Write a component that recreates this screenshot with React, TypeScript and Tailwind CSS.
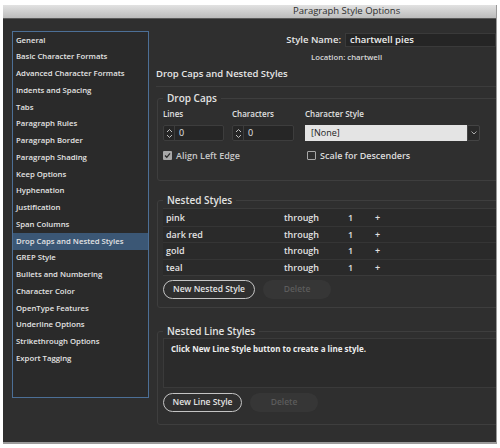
import React from "react";

const font = { fontFamily: '"Open Sans", "DejaVu Sans", sans-serif' };

const sections = [
  "General",
  "Basic Character Formats",
  "Advanced Character Formats",
  "Indents and Spacing",
  "Tabs",
  "Paragraph Rules",
  "Paragraph Border",
  "Paragraph Shading",
  "Keep Options",
  "Hyphenation",
  "Justification",
  "Span Columns",
  "Drop Caps and Nested Styles",
  "GREP Style",
  "Bullets and Numbering",
  "Character Color",
  "OpenType Features",
  "Underline Options",
  "Strikethrough Options",
  "Export Tagging",
];

const nested = ["pink", "dark red", "gold", "teal"];

const Spinner: React.FC<{ width: string }> = ({ width }) => (
  <div className={`flex h-[16px] ${width} rounded-[2px] border border-[#3d3d3d] bg-[#262626]`}>
    <div className="flex w-[11px] flex-col items-center justify-center border-r border-[#3d3d3d]">
      <svg width="7" height="11" viewBox="0 0 7 11" fill="none" stroke="#bdbdbd" strokeWidth="1">
        <path d="M1 4 L3.5 1.5 L6 4" />
        <path d="M1 7 L3.5 9.5 L6 7" />
      </svg>
    </div>
    <span className="pl-[4px] text-[9px] leading-[14px] text-[#e6e6e6]">0</span>
  </div>
);

const Group: React.FC<{ title: string; className?: string; children: React.ReactNode }> = ({
  title,
  className,
  children,
}) => (
  <fieldset
    className={`-mr-[6px] ml-[1px] rounded-[3px] border border-[#3e3e3e] pl-[5px] ${className ?? ""}`}
  >
    <legend className="px-[4px] text-[10px] font-semibold leading-[12px] text-[#e2e2e2]">{title}</legend>
    {children}
  </fieldset>
);

const PillButton: React.FC<{ label: string; width: string; disabled?: boolean }> = ({
  label,
  width,
  disabled,
}) =>
  disabled ? (
    <div
      className={`flex h-[19px] ${width} items-center justify-center rounded-full bg-[#363636] text-[8.5px] font-semibold text-[#5c5c5c]`}
    >
      {label}
    </div>
  ) : (
    <div
      className={`flex h-[19px] ${width} items-center justify-center rounded-full border border-[#c4c4c4] text-[8.5px] font-semibold text-[#e4e4e4]`}
    >
      {label}
    </div>
  );

export default function App() {
  return (
    <div className="h-[448px] w-[500px] bg-white pl-[3px] pt-[5px]" style={font}>
      <div className="flex h-[439px] w-[494px] flex-col border-b-2 border-r border-[#9a9a9a]">
        {/* title bar */}
        <div className="flex h-[14px] items-center border-b border-[#5a5a5a] bg-gradient-to-b from-[#e2e2e2] to-[#bcbcbc] pl-[290px] text-[9.5px] text-[#2e2e2e]">
          Paragraph Style Options
        </div>

        <div className="flex flex-1 overflow-hidden bg-[#2f2f2f]">
          {/* sidebar */}
          <div className="ml-[9px] mt-[12px] h-[367px] w-[137px] shrink-0 border border-[#4c6f96] bg-[#2a2a2a]">
            {sections.map((s) => (
              <div
                key={s}
                className={`flex h-[16.75px] items-center pl-[3px] text-[7.75px] font-semibold text-[#e4e4e4] ${
                  s === "Drop Caps and Nested Styles" ? "bg-[#3b5775]" : ""
                }`}
              >
                {s}
              </div>
            ))}
          </div>

          {/* main */}
          <div className="ml-[7px] flex flex-1 flex-col pt-[14px]">
            <div className="flex h-[14px] items-center">
              <div className="w-[189px] pr-[4px] text-right text-[9.5px] font-semibold text-[#e6e6e6]">
                Style Name:
              </div>
              <div className="flex h-[14px] flex-1 items-center border border-[#3a3a3a] bg-[#252525] pl-[4px] text-[9.5px] font-semibold text-[#eeeeee]">
                chartwell pies
              </div>
            </div>
            <div className="mt-[4px] h-[12px] pl-[155px] text-[7.75px] font-semibold leading-[12px] text-[#d6d6d6]">
              Location: chartwell
            </div>
            <div className="mt-[4px] h-[14px] text-[9.5px] font-semibold leading-[14px] text-[#e6e6e6]">
              Drop Caps and Nested Styles
            </div>
            <div className="mt-[5px] border-t border-[#3c3c3c]" />

            <Group title="Drop Caps" className="mt-[5px] h-[89px]">
              <div className="mt-[4px] flex text-[8px] font-semibold text-[#e0e0e0]">
                <div className="w-[69px]">Lines</div>
                <div className="w-[73px]">Characters</div>
                <div>Character Style</div>
              </div>
              <div className="mt-[5px] flex items-center">
                <Spinner width="w-[61px]" />
                <div className="ml-[8px]">
                  <Spinner width="w-[62px]" />
                </div>
                <div className="ml-[11px] flex h-[16px]">
                  <div className="flex w-[162px] items-center bg-[#e4e4e4] pl-[6px] text-[9px] text-[#222]">
                    [None]
                  </div>
                  <div className="flex w-[13px] items-center justify-center rounded-r-[2px] border border-[#444] bg-[#2a2a2a]">
                    <svg width="6" height="4" viewBox="0 0 6 4" fill="none" stroke="#aaa" strokeWidth="1">
                      <path d="M0.5 0.5 L3 3 L5.5 0.5" />
                    </svg>
                  </div>
                </div>
              </div>
              <div className="mt-[8px] flex items-center text-[9px] font-semibold text-[#dcdcdc]">
                <div className="flex w-[144px] items-center">
                  <div className="flex h-[9px] w-[9px] items-center justify-center rounded-[1px] bg-[#a8a8a8]">
                    <svg width="7" height="7" viewBox="0 0 7 7" fill="none" stroke="#2a2a2a" strokeWidth="1.3">
                      <path d="M1 3.5 L2.8 5.3 L6 1.3" />
                    </svg>
                  </div>
                  <span className="ml-[4px] text-[#c8c8c8]">Align Left Edge</span>
                </div>
                <div className="h-[9px] w-[9px] rounded-[1px] border border-[#a8a8a8]" />
                <span className="ml-[4px]">Scale for Descenders</span>
              </div>
            </Group>

            <Group title="Nested Styles" className="mt-[13px] h-[114px]">
              <div className="mt-[2px] border-y border-[#3a3a3a] bg-[#2a2a2a]">
                {nested.map((n, i) => (
                  <div
                    key={n}
                    className={`flex h-[16.5px] items-center text-[9px] font-semibold text-[#e2e2e2] ${
                      i > 0 ? "border-t border-[#353535]" : ""
                    }`}
                  >
                    <span className="w-[121px] pl-[3px]">{n}</span>
                    <span className="w-[64px]">through</span>
                    <span className="w-[27px]">1</span>
                    <span>+</span>
                  </div>
                ))}
              </div>
              <div className="mt-[4px] flex gap-[8px]">
                <PillButton label="New Nested Style" width="w-[92px]" />
                <PillButton label="Delete" width="w-[68px]" disabled />
              </div>
            </Group>

            <Group title="Nested Line Styles" className="mt-[17px] h-[100px]">
              <div className="mt-[1px] h-[50px] border border-[#3a3a3a] bg-[#2b2b2b] pl-[7px] pt-[4px] text-[8px] font-bold text-[#eeeeee]">
                Click New Line Style button to create a line style.
              </div>
              <div className="mt-[5px] flex gap-[8px]">
                <PillButton label="New Line Style" width="w-[79px]" />
                <PillButton label="Delete" width="w-[68px]" disabled />
              </div>
            </Group>
          </div>
        </div>
      </div>
    </div>
  );
}
